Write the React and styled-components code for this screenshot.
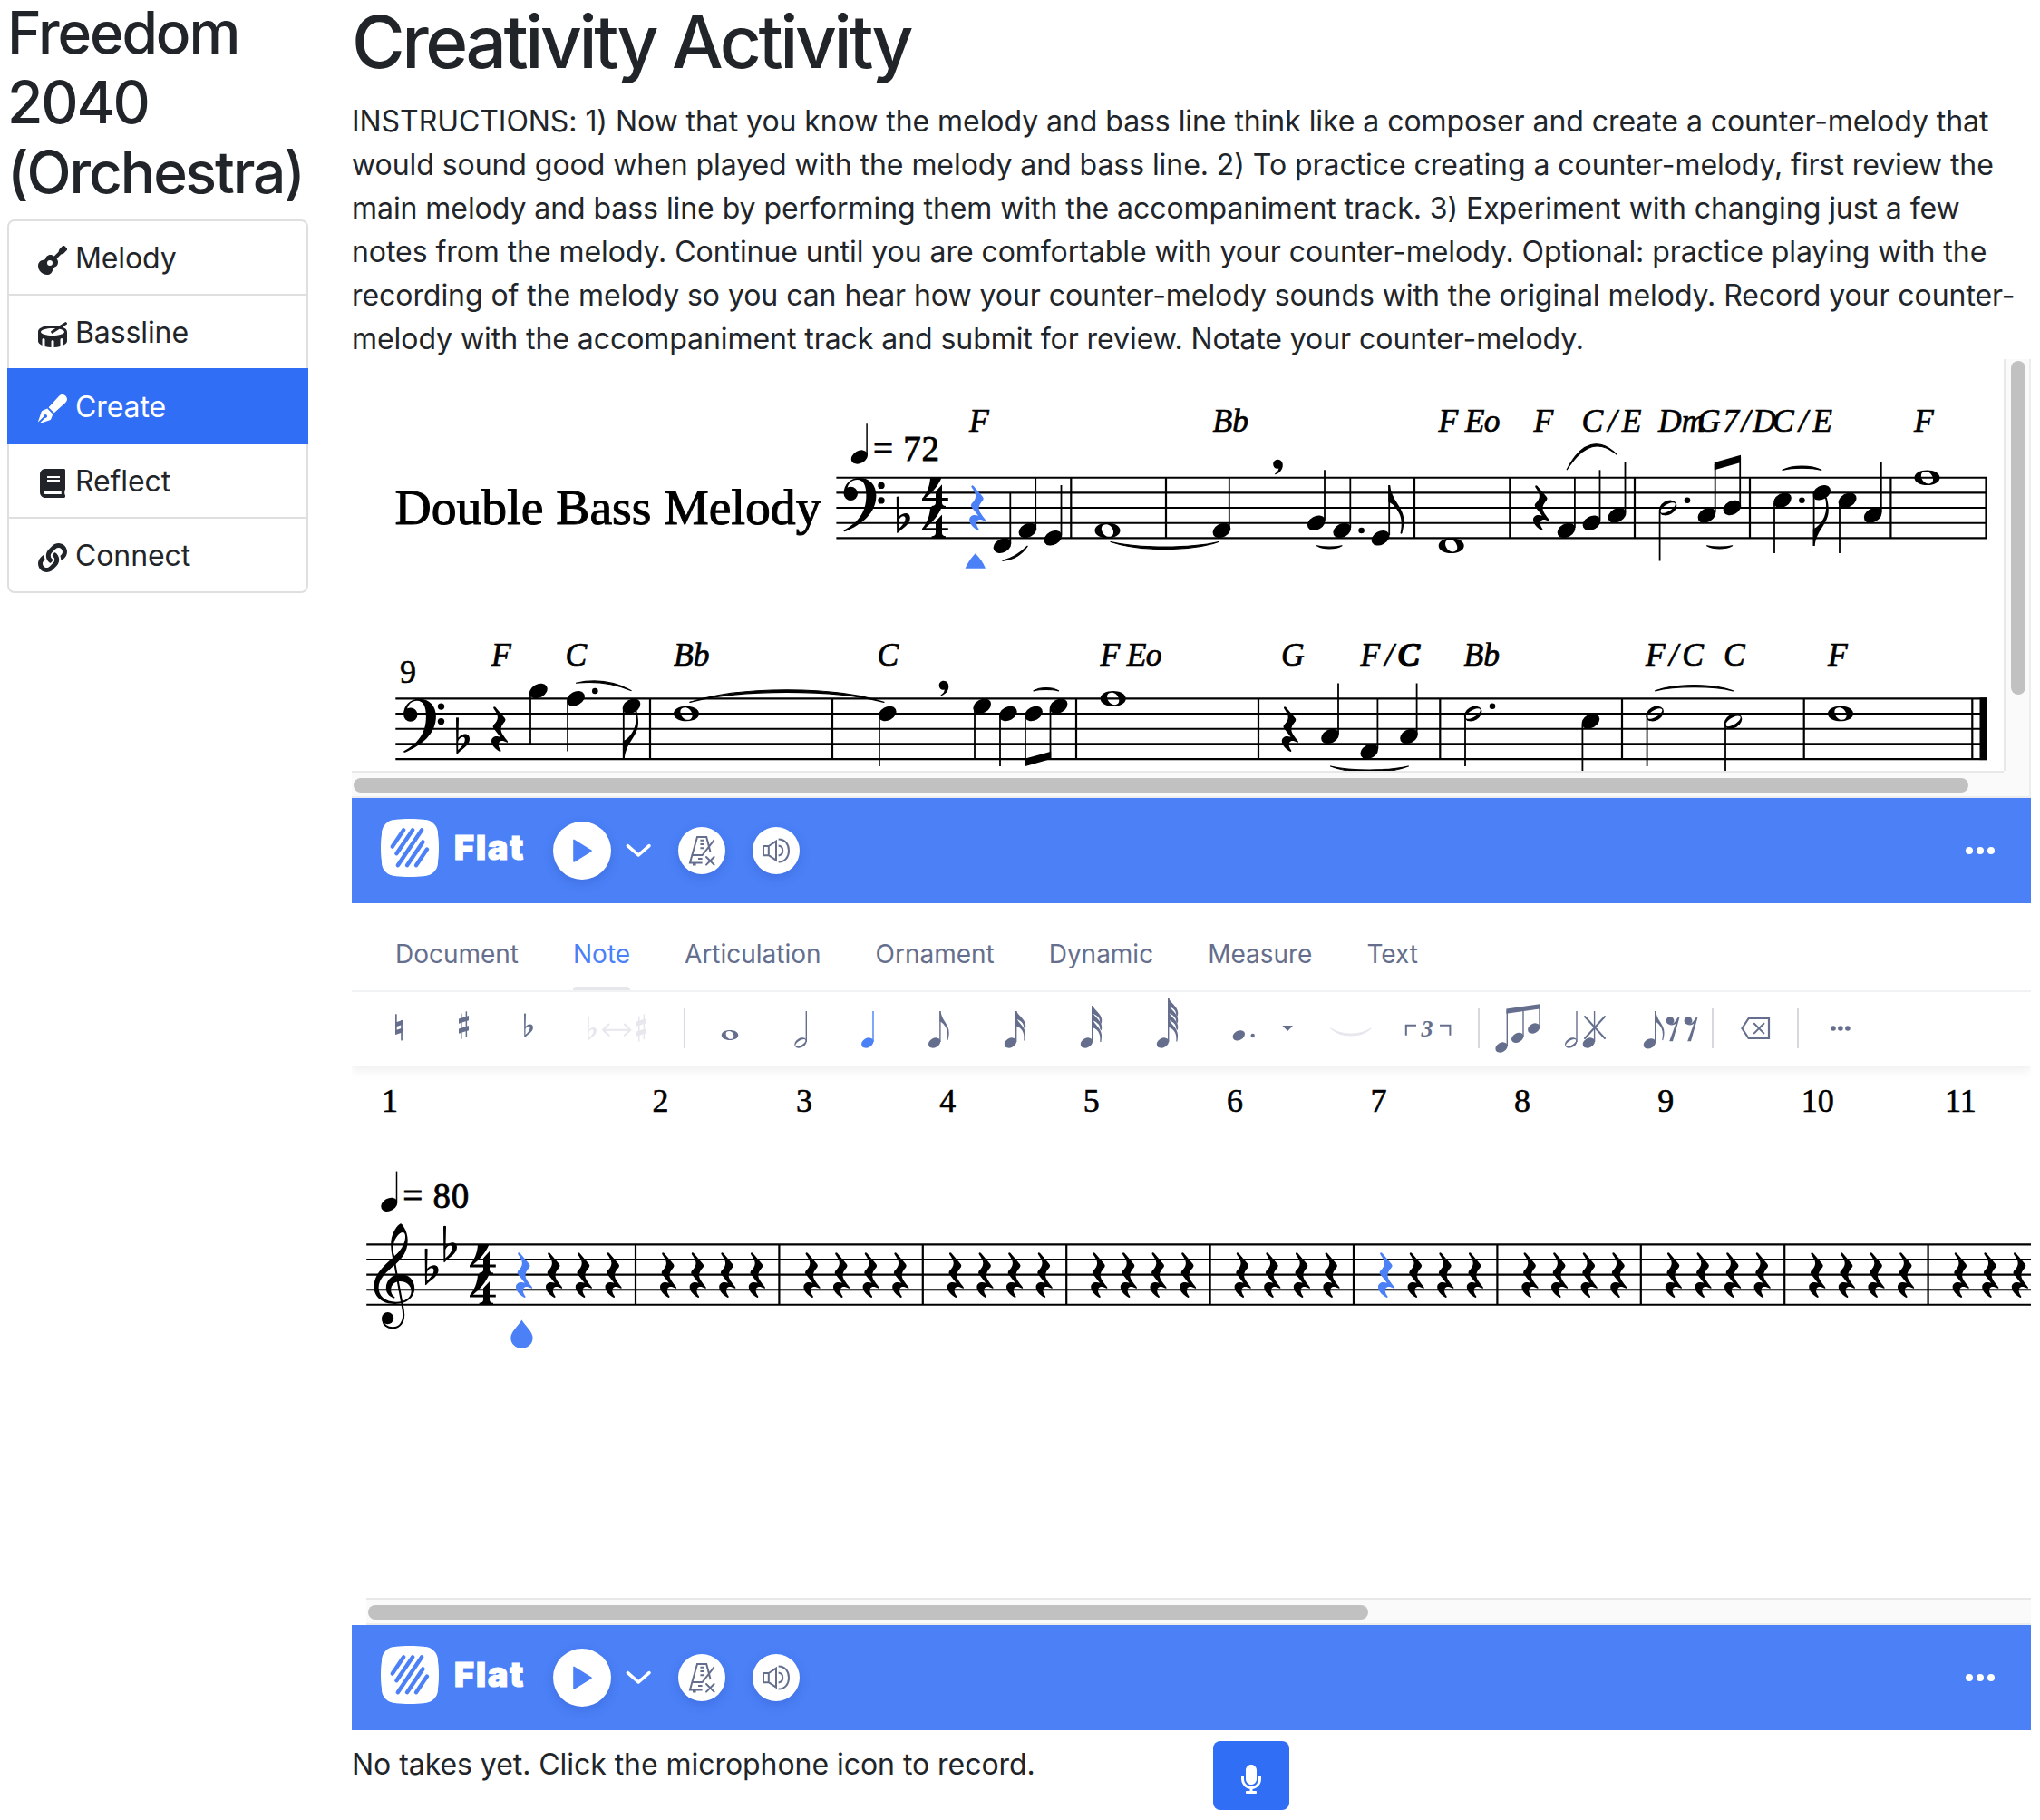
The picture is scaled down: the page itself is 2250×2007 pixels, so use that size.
import React from "react";
import styled, { createGlobalStyle, css } from "styled-components";
import { FaGuitar, FaDrum, FaPenFancy, FaBook, FaLink, FaMicrophone } from "react-icons/fa";

const BLUE = "#4b80f7";
const PRIMARY = "#306ef6";
const SLATE = "#656f8d";
const FAINT = "#e7e8ed";

const GlobalStyle = createGlobalStyle`
  html, body { margin: 0; background: #fff; }
  body {
    font-family: Inter, "Liberation Sans", sans-serif;
    font-size: 32px;
    line-height: 48px;
    color: #212529;
    overflow: hidden;
  }
  *, *::before, *::after { box-sizing: border-box; }
`;

const Page = styled.div`
  display: flex;
  width: 2250px;
  height: 2007px;
  overflow: hidden;
`;

const Sidebar = styled.aside`
  width: 332px;
  margin: 0 48px 0 8px;
  padding-top: 0;
  flex: none;
`;

const SongTitle = styled.h2`
  margin: -2px 0 13.6px;
  font-size: 64px;
  line-height: 76.8px;
  font-weight: 500;
  letter-spacing: -2.1px;
`;

const NavList = styled.nav`
  display: flex;
  flex-direction: column;
  border: 2px solid #dfdfdf;
  border-radius: 8px;
`;

const NavItem = styled.a`
  display: flex;
  align-items: center;
  height: 82px;
  padding: 2px 32px 0;
  gap: 9px;
  color: #212529;
  letter-spacing: -0.1px;
  border-bottom: 2px solid #dfdfdf;
  svg { width: 32px; height: 32px; margin-top: 5px; }
  &:last-child { border-bottom: 0; height: 80px; }
  ${(p) => p.$active && css`
    color: #fff;
    background: ${PRIMARY};
    margin: -2px -2px 0;
    padding: 4px 34px 0;
    height: 84px;
    border-color: ${PRIMARY};
  `}
`;

const Main = styled.main`
  width: 1852px;
  flex: none;
`;

const PageTitle = styled.h1`
  margin: -2px 0 15.5px;
  font-size: 80px;
  line-height: 96px;
  font-weight: 500;
  letter-spacing: -3.45px;
`;

const Instructions = styled.p`
  margin: 0 0 -1.5px;
  white-space: nowrap;
  letter-spacing: -0.06px;
`;

const ScoreViewer = styled.section`
  display: grid;
  grid-template-columns: 1822px 30px;
  grid-template-rows: 454px 30px;
  height: 484px;
  background: #fafafa;
`;

const Sheet = styled.svg`
  display: block;
  background: #fff;
  font-family: "Liberation Serif", serif;
`;

const VTrack = styled.div`
  background: #fafafa;
  border-left: 2px solid #e8e8e8;
  border-right: 2px solid #ededed;
  padding: 2px 4px 0 6px;
`;

const HTrack = styled.div`
  height: 30px;
  margin-left: ${(p) => p.$inset || 0}px;
  background: #fafafa;
  border-top: 2px solid #e8e8e8;
  border-bottom: 2px solid #ededed;
  padding: 6px 0 0 2px;
`;

const Corner = styled.div`
  border-right: 2px solid #ededed;
  border-bottom: 2px solid #ededed;
`;

const Thumb = styled.div`
  width: ${(p) => p.$w}px;
  height: ${(p) => p.$h}px;
  border-radius: 8px;
  background: #c1c1c1;
`;

const PlayerBar = styled.header`
  display: flex;
  align-items: center;
  height: 116px;
  padding: 0 40px 0 32px;
  background: ${BLUE};
`;

const Brand = styled.div`
  display: flex;
  align-items: center;
  gap: 17px;
  width: 190px;
  height: 64px;
  margin-bottom: 6px;
  color: #fff;
  font-size: 37.5px;
  font-weight: 900;
  letter-spacing: 2px;
  -webkit-text-stroke: 1.2px #fff;
`;

const RoundButton = styled.button`
  width: ${(p) => p.$size}px;
  height: ${(p) => p.$size}px;
  padding: 0;
  border: 0;
  border-radius: 50%;
  background: #fff;
  box-shadow: 0 4px 12px rgba(30, 60, 150, 0.22);
  margin-right: ${(p) => p.$gap || 0}px;
  svg { display: block; }
`;

const Menu = styled.button`
  display: flex;
  gap: 4px;
  margin-left: auto;
  padding: 0;
  border: 0;
  background: none;
  i { width: 8px; height: 8px; border-radius: 50%; background: #fff; }
`;

const Chevron = styled.svg`
  margin: 0 28px 0 12px;
`;

const Tabs = styled.div`
  display: flex;
  gap: 60px;
  height: 98px;
  padding-left: 48px;
  border-bottom: 2px solid #f1f2f4;
`;

const Tab = styled.div`
  display: flex;
  flex-direction: column;
  justify-content: flex-end;
  font-size: 28px;
  line-height: 40px;
  letter-spacing: -0.01px;
  color: ${(p) => (p.$active ? BLUE : SLATE)};
  &::after {
    content: "";
    height: 4px;
    margin-top: 16px;
    border-radius: 4px 4px 0 0;
    background: ${(p) => (p.$active ? "#e6e7ea" : "transparent")};
  }
`;

const Toolbar = styled.div`
  display: flex;
  height: 82px;
  position: relative;
  box-shadow: 0 4px 12px rgba(0, 0, 0, 0.07);
  clip-path: inset(0 0 -24px 0);
`;

const Tool = styled.svg`
  display: block;
  flex: none;
  color: ${(p) => p.$color || SLATE};
  font-family: "Liberation Serif", serif;
`;

const RecordRow = styled.div`
  display: flex;
  align-items: flex-start;
  padding-top: 12px;
`;

const TakesNote = styled.div`
  width: 950px;
  padding-top: 2px;
  letter-spacing: -0.05px;
`;

const RecordButton = styled.button`
  display: flex;
  align-items: center;
  justify-content: center;
  width: 84px;
  height: 76px;
  padding: 8px 0 0;
  border: 0;
  border-radius: 8px;
  background: ${PRIMARY};
  color: #fff;
  svg { width: 32px; height: 32px; }
`;

/* ---------- notation primitives ---------- */

const SP = 16.67;

const Lines = ({ x1, x2, y, step = SP }) => (
  <g stroke="currentColor" strokeWidth="2.1">
    {[0, 1, 2, 3, 4].map((i) => (
      <line key={i} x1={x1} x2={x2} y1={y + i * step} y2={y + i * step} />
    ))}
  </g>
);

const Bar = ({ x, y, h = 66.7, w = 2.2 }) => (
  <rect x={x - w / 2} y={y} width={w} height={h} fill="currentColor" />
);

const Stem = ({ x, y1, y2, w = 1.8 }) => (
  <line x1={x} x2={x} y1={y1} y2={y2} stroke="currentColor" strokeWidth={w} />
);

const Head = ({ x, y, k = 1 }) => (
  <ellipse rx="10.5" ry="7.5" fill="currentColor" transform={`translate(${x} ${y}) scale(${k}) rotate(-29)`} />
);

const HalfHead = ({ x, y, k = 1 }) => (
  <path
    fill="currentColor"
    fillRule="evenodd"
    d="M-10.5 0A10.5 7.5 0 1 0 10.5 0A10.5 7.5 0 1 0-10.5 0ZM-9.2 .6A9.2 3.8 0 1 1 9.2-.6A9.2 3.8 0 1 1-9.2 .6Z"
    transform={`translate(${x} ${y}) scale(${k}) rotate(-31)`}
  />
);

const Whole = ({ x, y, k = 1 }) => (
  <path
    fill="currentColor"
    fillRule="evenodd"
    d="M-14 0C-14-5-8-8.3 0-8.3S14-5 14 0S8 8.3 0 8.3S-14 5-14 0ZM-4.6-5.9C-8-4-6.8 1.6-3.2 4.9C-.8 7 2.6 7.3 4.7 5.9C8 3.6 6.6-1.8 3.2-5C.8-7-2.4-7.2-4.6-5.9Z"
    transform={`translate(${x} ${y}) scale(${k})`}
  />
);

const Dot = ({ x, y, r = 3.3 }) => <circle cx={x} cy={y} r={r} fill="currentColor" />;

const FLAG = "M-.9 0H.9C1.6 7.5 4.6 13.6 9.2 20.6C13.6 27.4 16.2 32.5 16.2 39.6C16.2 44.6 15.2 49.2 14.3 53Q13.2 54.4 12.3 53C13.9 46.5 14.3 38.6 11.3 31.8C8.3 25.4 4 20.6-.9 18.6Z";
const Flag = ({ x, y, down, k = 1 }) => (
  <path d={FLAG} fill="currentColor" transform={`translate(${x} ${y}) scale(${k} ${down ? -k : k})`} />
);

const Rest = ({ x, y, color = "currentColor" }) => (
  <path
    transform={`translate(${x} ${y})`}
    fill={color}
    d="M2.5 2.4C1.4 .6 3.2-.6 4.4 .8L14.8 13Q16.2 14.8 15 16.6C12 20 10.3 22.8 10.5 25.8C10.8 29.5 14.3 34 17.8 38.2C18.6 39.3 18 40.4 16.8 39.6C13.5 37.8 9.8 37.3 8.4 39.8C7 42.4 8.2 45.6 10.4 48.6C10.9 49.6 10 50.3 9 49.8C4.6 47.2 0 42.6 0 38.2C0 34 4.6 31.8 9.8 33.8L2.2 24Q1 22.3 2.3 20.6C5 17.6 6.9 15.3 6.9 12C6.9 8.6 4.6 5.6 2.5 2.4Z"
  />
);

const FlatSign = ({ x, y, k = 1 }) => (
  <path
    fill="currentColor"
    fillRule="evenodd"
    transform={`translate(${x} ${y}) scale(${k})`}
    d="M0 .6Q1.5-.3 3 .6L2.5 22.4C5 19.8 7.8 18.6 10.2 18.6C13.2 18.6 15 20.8 15 24C15 31.2 6 35.2 1.7 40.2Q.6 41.2 .4 39.6ZM2.3 26.4L2.2 36C6 32.8 9.8 28.2 9.8 24.4C9.8 20 4.2 21.4 2.3 26.4Z"
  />
);

const SharpSign = ({ x, y }) => (
  <g transform={`translate(${x} ${y})`} fill="currentColor">
    <rect x="2" y="2.4" width="1.5" height="28" />
    <rect x="7.6" y="0" width="1.5" height="28" />
    <path d="M0 8.2L11 4.8V10L0 13.4ZM0 19.2L11 15.8V21L0 24.4Z" />
  </g>
);

const BassClef = ({ x, y }) => (
  <g transform={`translate(${x} ${y})`} fill="currentColor">
    <path d="M.6 17.5C.6 7 8 0 17.8 0C29 0 36.4 7.6 36.4 19.4C36.4 39 20 51.6 2.4 59Q.4 59.6 .6 57.9C15 49.8 25.4 39.4 25.4 19.5C25.4 8.4 22.4 2 15.4 2C9.8 2 5.6 5.6 4.6 11.4Z" />
    <circle cx="8.3" cy="17.4" r="7.7" />
    <circle cx="42" cy="8.4" r="3.7" />
    <circle cx="42" cy="24.9" r="3.7" />
  </g>
);

const TrebleClef = ({ x, y }) => (
  <g transform={`translate(${x} ${y})`}>
    <path
      fill="currentColor"
      fillRule="evenodd"
      d="M28.6 .5C23.6 4 19 13 18.8 22C18.7 28 19.6 33 20.6 38C10 47.5 0 56.5 0 69.4C0 81.4 10 88.6 23 88.6C36.4 88.6 44.8 81.4 44.8 71.4C44.8 62.2 38 55.8 29.4 55.8C20.4 55.8 13.4 62.4 13.4 71C13.4 76.6 16.6 80.6 22.2 82.2C23.3 82.3 23.4 81.4 22.6 80.8C19.8 78.6 18.8 76 18.8 73.2C18.8 67.6 23.4 63.8 28.6 63.8C35.8 63.8 41.2 68.4 41.2 74.6C41.2 81.8 33.6 86.4 24.4 86.4C12.4 86.4 5.2 79.8 5.2 70.8C5.2 60.4 14 53.2 23 45.6C30.6 39.2 37.3 31 37.3 18.4C37.3 10.6 33.4 3.4 30.6 .5Q29.6-.5 28.6 .5ZM22.6 35.8C21 31 21 27 21.6 23.4C22.8 16 28.4 9.8 31.8 9.8C34 9.8 34.8 12.4 34.6 15.6C34 23.4 28.4 31.2 22.6 35.8Z"
    />
    <path
      fill="none"
      stroke="currentColor"
      strokeWidth="2.1"
      d="M21.8 36C24.6 56 29 76 32.4 96C34.2 108.6 28.6 115 20.8 115C14.6 115 10.4 111.6 9.7 106"
    />
    <circle cx="15.2" cy="104.4" r="6.6" fill="currentColor" />
  </g>
);

const FOUR = "M9 0H21.4C18.4 8 10.4 17 3.8 22.2H15V15L22 7.4V22.2H28.8V25H22V27.4C22 30 23.4 31 26 31.2V33.3H10.6V31.2C13.6 31 15 30 15 27.4V25H0V22.8C5 17.4 8.6 9 9 0Z";
const CommonTime = ({ x, y }) => (
  <g fill="currentColor">
    <path d={FOUR} transform={`translate(${x} ${y})`} />
    <path d={FOUR} transform={`translate(${x} ${y + 33.2})`} />
  </g>
);

const Breath = ({ x, y }) => (
  <path
    transform={`translate(${x} ${y})`}
    fill="currentColor"
    d="M5.2 0C8.8 0 10.8 2.8 10.8 6.2C10.8 10.8 7.6 14.8 2.8 16.6Q1.8 16.6 2.2 15.6C5 13.8 6.2 12 6.3 9.8C3 10.6 .2 8.6 .2 5C.2 2.2 2.4 0 5.2 0Z"
  />
);

const Slur = ({ x1, y1, x2, y2, bend, t = 3.4 }) => {
  const dx = (x2 - x1) * 0.26;
  const s = Math.sign(bend);
  const outer = bend + (s * t) / 2;
  const inner = bend - (s * t) / 2;
  return (
    <path
      d={`M${x1} ${y1}C${x1 + dx} ${y1 + outer} ${x2 - dx} ${y2 + outer} ${x2} ${y2}C${x2 - dx} ${y2 + inner} ${x1 + dx} ${y1 + inner} ${x1} ${y1}Z`}
      fill="currentColor"
      stroke="currentColor"
      strokeWidth="1.2"
      strokeLinejoin="round"
    />
  );
};

const Chord = ({ x, y, w, bold, children }) => (
  <text
    x={x}
    y={y + 0.4}
    fontSize="35.5"
    fontStyle="italic"
    fontWeight={bold ? 700 : 400}
    stroke="currentColor"
    strokeWidth="0.7"
    textLength={w}
  >
    {children}
  </text>
);

const Tempo = ({ x, y, children }) => (
  <g>
    <Head x={x} y={y} k={0.92} />
    <Stem x={x + 8.2} y1={y - 3} y2={y - 36.7} w={1.5} />
    <text x={x + 15} y={y + 4} fontSize="39" textLength="73" stroke="currentColor" strokeWidth="0.8">
      {children}
    </text>
  </g>
);

/* [x, y, stemX, stemEnd, flag] */
const QUARTERS = [
  [1105.5, 601.7, 1114.3, 543.3],
  [1133.4, 585, 1142.2, 526.7],
  [1161.4, 593.3, 1170.5, 535],
  [1347.4, 585, 1355.8, 526.7],
  [1451.8, 576.7, 1461, 518.3],
  [1480.2, 585, 1489.3, 526.7],
  [1522.6, 593.3, 1532.2, 535, 1],
  [1727.5, 585, 1736.9, 526.7],
  [1755.5, 576.7, 1764.5, 518.3],
  [1783.5, 568.3, 1792.5, 510],
  [1882.4, 568.3, 1891.7, 512],
  [1910.4, 560, 1919.2, 504],
  [1966, 551.7, 1957, 610],
  [2009.2, 543.3, 2000.6, 602, 1],
  [2037.6, 551.7, 2029, 610],
  [2065.6, 568.3, 2074.8, 510],
  [593.8, 762, 585, 820],
  [635, 770.3, 626.1, 828.5],
  [696.5, 778.7, 687.8, 836, 1],
  [978.7, 787, 969.9, 845],
  [1083.2, 778.7, 1075, 837],
  [1111.8, 787, 1103, 845],
  [1140, 787, 1130.9, 844],
  [1167.6, 778.7, 1158.5, 836],
  [1467, 812, 1476, 753.5],
  [1510.3, 828.7, 1519.4, 770],
  [1554, 812, 1562.6, 753.5],
  [1754.4, 795.3, 1745.4, 853],
];

const HALVES = [
  [1839.6, 560, 1830.6, 618.5],
  [1624.7, 787, 1616, 845],
  [1825.2, 787, 1816.6, 845],
  [1911.5, 795.3, 1903, 853],
];

const MelodySheet = () => (
  <Sheet width="1822" height="454" viewBox="388 396 1822 454" color="#000">
    <text x="435.5" y="577.5" fontSize="54.5" textLength="470" lengthAdjust="spacingAndGlyphs" stroke="currentColor" strokeWidth="1">
      Double Bass Melody
    </text>
    <Tempo x={947.9} y={504}>= 72</Tempo>
    <Lines x1={922.4} x2={2191.6} y={526.7} />
    <Lines x1={436.3} x2={2191.6} y={770.4} />
    {[1181.3, 1286, 1560, 1665.3, 1803, 1930, 2085.4, 2190.5].map((x) => (
      <Bar key={x} x={x} y={526.7} />
    ))}
    {[717, 918, 1187, 1388, 1588.3, 1789, 1989.7, 2175.3].map((x) => (
      <Bar key={x} x={x} y={770.4} />
    ))}
    <Bar x={2187.6} y={769.4} w={8.2} h={68.7} />
    <BassClef x={930} y={527} />
    <FlatSign x={988.8} y={547.4} />
    <CommonTime x={1017} y={526.9} />
    <BassClef x={444.5} y={770.7} />
    <FlatSign x={503} y={791} />
    <Rest x={1069.2} y={535} color={BLUE} />
    <path d="M1064.6 626.8C1067.6 620 1071 615.4 1075.8 610.3C1080.6 615.4 1084.2 620 1087 626.8Z" fill={BLUE} />
    <Rest x={1691} y={535} />
    <Rest x={542} y={779} />
    <Rest x={1413.8} y={779} />
    {QUARTERS.map(([x, y, sx, end, flag]) => (
      <g key={`${x}`}>
        <Head x={x} y={y} />
        <Stem x={sx} y1={y + (end < y ? -3 : 3)} y2={end} />
        {flag && <Flag x={sx} y={end} down={end > y} />}
      </g>
    ))}
    {HALVES.map(([x, y, sx, end]) => (
      <g key={`${x}`}>
        <HalfHead x={x} y={y} />
        <Stem x={sx} y1={y + 3} y2={end} />
      </g>
    ))}
    {[[1221.5, 585], [1600.7, 601.7], [2125.5, 526.7], [757, 787], [1227.7, 770.4], [2030, 787]].map(([x, y]) => (
      <Whole key={x} x={x} y={y} />
    ))}
    {[[1501.6, 585], [1861, 551.7], [1987.4, 551.7], [656.3, 762], [1646, 778.7]].map(([x, y]) => (
      <Dot key={x} x={x} y={y} />
    ))}
    <path d="M1890.8 510L1920 501.7V510L1890.8 518.3Z" fill="currentColor" />
    <path d="M1130 836.7L1159.2 828.7V837L1130 845.3Z" fill="currentColor" />
    <Breath x={1404} y={506.7} />
    <Breath x={1035.5} y={750.7} />
    <path d="M1105.5 618.3C1118 615.5 1126 609.5 1133.4 602C1127 611.5 1118.5 617.5 1105.5 618.3Z" fill="currentColor" stroke="currentColor" strokeWidth="1.2" />
    <Slur x1={1225} y1={597.5} x2={1344} y2={597.5} bend={9} />
    <Slur x1={1452.5} y1={601.8} x2={1480} y2={601.8} bend={3} t={2.4} />
    <path d="M1728 518.3C1744 486 1765 482 1783.5 501.7C1765 485.5 1747 488.5 1728 518.3Z" fill="currentColor" stroke="currentColor" strokeWidth="1.1" />
    <Slur x1={1882.6} y1={601.8} x2={1910.6} y2={601.8} bend={3} t={2.4} />
    <Slur x1={1966} y1={518.3} x2={2008.8} y2={518.3} bend={-4.2} t={2.8} />
    <path d="M635 753.3C656 748.5 678 751.5 696.5 761.7C678 754 656 751 635 753.3Z" fill="currentColor" stroke="currentColor" strokeWidth="1.1" />
    <Slur x1={760.8} y1={774.4} x2={975} y2={774.4} bend={-16.5} />
    <Slur x1={1140} y1={761.8} x2={1167.6} y2={761.8} bend={-3.2} t={2.4} />
    <Slur x1={1467.5} y1={845} x2={1553.4} y2={845} bend={7} />
    <Slur x1={1825.6} y1={761.8} x2={1911.5} y2={761.8} bend={-7} t={2.8} />
    <Chord x={1069} y={475.8}>F</Chord>
    <Chord x={1337.5} y={475.8}>Bb</Chord>
    <Chord x={1586.5} y={475.8} w={68}>F Eo</Chord>
    <Chord x={1691.5} y={475.8}>F</Chord>
    <Chord x={1744.5} y={475.8} w={66}>C/E</Chord>
    <Chord x={1829} y={475.8}>Dm</Chord>
    <Chord x={1872} y={475.8} w={87}>G7/D</Chord>
    <Chord x={1955} y={475.8} w={66}>C/E</Chord>
    <Chord x={2111} y={475.8}>F</Chord>
    <text x="441" y="752.8" fontSize="36" stroke="currentColor" strokeWidth="0.6">9</text>
    <Chord x={542} y={734}>F</Chord>
    <Chord x={623.5} y={734}>C</Chord>
    <Chord x={743} y={734}>Bb</Chord>
    <Chord x={967.5} y={734}>C</Chord>
    <Chord x={1213.5} y={734} w={68}>F Eo</Chord>
    <Chord x={1413} y={734}>G</Chord>
    <Chord x={1500.5} y={734} w={66}>F/C</Chord>
    <Chord x={1541.5} y={734} bold>C</Chord>
    <Chord x={1614.5} y={734}>Bb</Chord>
    <Chord x={1815} y={734} w={64}>F/C</Chord>
    <Chord x={1901} y={734}>C</Chord>
    <Chord x={2016} y={734}>F</Chord>
  </Sheet>
);

const MEASURE = 158.4;
const FIRST_BAR = 701;

const EditorSheet = () => (
  <Sheet width="1852" height="586" viewBox="388 1176 1852 586" color="#000">
    <g fontSize="36" stroke="currentColor" strokeWidth="0.6">
      <text x="421" y="1225.5">1</text>
      {Array.from({ length: 10 }, (_, i) => (
        <text key={i} x={719.5 + i * MEASURE} y="1225.5">{i + 2}</text>
      ))}
    </g>
    <Tempo x={429.3} y={1328.3}>= 80</Tempo>
    <Lines x1={404.2} x2={2240} y={1372.4} step={16.6} />
    {Array.from({ length: 10 }, (_, i) => (
      <Bar key={i} x={FIRST_BAR + i * MEASURE} y={1372.4} h={66.4} />
    ))}
    <TrebleClef x={412.4} y={1349.3} />
    <FlatSign x={468.6} y={1376.6} />
    <FlatSign x={489} y={1351.6} />
    <CommonTime x={518} y={1372.4} />
    {[569, 602, 634.8, 667.5].map((x, j) => (
      <Rest key={x} x={x} y={1381} color={j === 0 ? BLUE : undefined} />
    ))}
    {Array.from({ length: 10 }, (_, i) =>
      [0, 1, 2, 3].map((j) => (
        <Rest
          key={`${i}-${j}`}
          x={FIRST_BAR + 27 + i * MEASURE + j * 32.6}
          y={1381}
          color={i === 5 && j === 0 ? BLUE : undefined}
        />
      ))
    )}
    <path d="M575.4 1455.6C580 1463 587.6 1468.6 587.6 1475.6C587.6 1482 582 1487 575.4 1487S563.3 1482 563.3 1475.6C563.3 1468.6 571 1463 575.4 1455.6Z" fill={BLUE} />
  </Sheet>
);

/* ---------- note toolbar ---------- */

const SmallFlags = ({ x, y, n }) => (
  <g transform={`translate(${x} ${y})`} fill="currentColor">
    {Array.from({ length: n - 1 }, (_, i) => (
      <path
        key={i}
        transform={`translate(0 ${i * 7.6})`}
        d="M-.6 0H.6C1.4 4.6 10 8.4 10.4 15.6C10.5 17.4 10.2 18.8 9.6 20L8.4 18C8.6 12.6 3.8 10.2-.6 8.2Z"
      />
    ))}
    <path
      transform={`translate(0 ${(n - 1) * 7.6})`}
      d={`M-.6 0H.6C1.6 5 9.6 9 10.2 17C10.4 20 10 22.6 9.6 24.8H8.4C9 19.6 8.8 11.6-.6 8.6Z`}
    />
  </g>
);

const Divider = ({ x }) => <rect x={x - 1} y="18" width="2" height="44" fill="#d7d8e0" />;

const Cross = ({ x, y, w, h = w, s = 2 }) => (
  <path d={`M${x} ${y}l${w} ${h}M${x + w} ${y}l${-w} ${h}`} stroke="currentColor" strokeWidth={s} strokeLinecap="round" fill="none" />
);

const SmallNote = ({ x, top = 21, y = 56, half }) => (
  <g>
    {half ? <HalfHead x={x} y={y} k={0.68} /> : <Head x={x} y={y} k={0.68} />}
    <Stem x={x + 6.3} y1={y - 1} y2={top} w={1.4} />
  </g>
);

const EighthRest = ({ x }) => (
  <g transform={`translate(${x} 0)`}>
    <circle cx="8.6" cy="31.5" r="4.4" fill="currentColor" />
    <path d="M7 35.2C11.2 36.4 14.2 33.2 16.8 28.2L19 28L11.6 54.2H7.8L14.8 35C12 36.8 9.4 37 7 35.2Z" fill="currentColor" />
  </g>
);

const TOOLS = [
  { w: 87, draw: (
    <g fill="currentColor">
      <rect x="436" y="24.3" width="1.7" height="22" />
      <rect x="442.2" y="31" width="1.7" height="22.4" />
      <path d="M436 33.6L443.9 31V36L436 38.6ZM436 42.2L443.9 39.6V44.4L436 47Z" />
    </g>
  ) },
  { w: 70, draw: <SharpSign x={506} y={21.3} /> },
  { w: 75, draw: <FlatSign x={578} y={23.3} k={0.66} /> },
  { w: 120, color: FAINT, draw: (
    <g>
      <FlatSign x={648} y={26.8} k={0.66} />
      <path d="M665 41.7H695.4M671.6 35.6L665 41.7L671.6 47.8M688.8 35.6L695.4 41.7L688.8 47.8" fill="none" stroke="currentColor" strokeWidth="2" strokeLinecap="round" strokeLinejoin="round" />
      <SharpSign x={702} y={24.3} />
    </g>
  ) },
  { w: 30, draw: <Divider x={755} /> },
  { w: 75, draw: <Whole x={805} y={47.4} k={0.66} /> },
  { w: 75, draw: <SmallNote x={883} half /> },
  { w: 75, color: BLUE, draw: <SmallNote x={956.7} /> },
  { w: 80, draw: (
    <g><SmallNote x={1030.6} /><Flag x={1037} y={21} k={0.6} /></g>
  ) },
  { w: 85, draw: (
    <g><SmallNote x={1114.4} /><SmallFlags x={1120.8} y={21} n={2} /></g>
  ) },
  { w: 85, draw: (
    <g><SmallNote x={1198.4} top={15} /><SmallFlags x={1204.8} y={15} n={3} /></g>
  ) },
  { w: 85, draw: (
    <g><SmallNote x={1282.4} top={7} /><SmallFlags x={1288.8} y={7} n={4} /></g>
  ) },
  { w: 70, draw: (
    <g><Head x={1366.3} y={47.8} k={0.68} /><Dot x={1381.7} y={48} r={2.2} /></g>
  ) },
  { w: 40, draw: <path d="M1414.3 37H1426L1420.2 43Z" fill="currentColor" /> },
  { w: 90, color: FAINT, draw: <Slur x1={1468} y1={40} x2={1512} y2={40} bend={9.4} t={2.4} /> },
  { w: 90, draw: (
    <g>
      <path d="M1550.8 47.8V36.8H1562M1588 36.8H1599.4V47.8" fill="none" stroke="currentColor" strokeWidth="2" />
      <text x="1567.6" y="48.6" fontSize="26" fontWeight="700" fontStyle="italic" fill="currentColor">3</text>
    </g>
  ) },
  { w: 20, draw: <Divider x={1631} /> },
  { w: 75, draw: (
    <g>
      <SmallNote x={1656} y={61} top={20} />
      <SmallNote x={1673.7} y={50.4} top={17} />
      <SmallNote x={1691.7} y={40} top={15} />
      <path d="M1661.4 18.5L1698.2 13.3V18.5L1661.4 23.8Z" fill="currentColor" />
    </g>
  ) },
  { w: 75, draw: (
    <g><SmallNote x={1732.7} half /><SmallNote x={1752.3} /><Cross x={1748} y={27} w={22} h={24} /></g>
  ) },
  { w: 85, draw: (
    <g>
      <SmallNote x={1819.4} y={56.8} /><Flag x={1825.8} y={21} k={0.6} />
      <EighthRest x={1833.4} /><EighthRest x={1853.4} />
    </g>
  ) },
  { w: 25, draw: <Divider x={1889} /> },
  { w: 70, draw: (
    <g>
      <path d="M1921.4 40L1928.6 29H1951V51H1928.6Z" fill="none" stroke="currentColor" strokeWidth="2.2" />
      <Cross x={1934.8} y={34.8} w={10.6} />
    </g>
  ) },
  { w: 25, draw: <Divider x={1983} /> },
  { w: 65, draw: <g>{[2022, 2029.9, 2037.9].map((x) => <Dot key={x} x={x} y={40} r={2.8} />)}</g> },
];

const NoteToolbar = () => {
  let left = 388;
  return (
    <Toolbar>
      {TOOLS.map(({ w, color, draw }) => {
        const x = left;
        left += w;
        return (
          <Tool key={x} $color={color} width={w} height="82" viewBox={`${x} 0 ${w} 82`}>
            {draw}
          </Tool>
        );
      })}
    </Toolbar>
  );
};

/* ---------- player bar ---------- */

const Player = () => (
  <PlayerBar>
    <Brand>
      <svg width="64" height="64" viewBox="0 0 64 64">
        <path d="M32 0C56 0 64 2 64 32S56 64 32 64S0 62 0 32S8 0 32 0Z" fill="#fff" />
        <rect x="1" y="1" width="62" height="62" rx="15" fill="#fff" />
        <path
          d="M25.2 12.2L12.8 30.6M35.2 12.2L17.4 38.2M45.2 12.2L18.8 51.2M46.4 25.4L29 51.2M51 33.6L39 51.2"
          stroke={BLUE}
          strokeWidth="4.4"
          strokeLinecap="round"
        />
      </svg>
      Flat
    </Brand>
    <RoundButton $size={64}>
      <svg width="64" height="64"><path d="M23 20.4V44L42 32.2Z" fill={BLUE} stroke={BLUE} strokeWidth="1.6" strokeLinejoin="round" /></svg>
    </RoundButton>
    <Chevron width="34" height="30" viewBox="0 0 34 30">
      <path d="M6.4 9.6L18.2 20L30 9.6" fill="none" stroke="#fff" strokeWidth="3.6" strokeLinecap="round" strokeLinejoin="round" />
    </Chevron>
    <RoundButton $size={52} $gap={30}>
      <svg width="52" height="52" fill="none" stroke={SLATE} strokeWidth="2">
        <path d="M35.6 28L31.2 11H21L13 39.4H26.6M15.4 31H26.6L39.6 14.4M24.4 14.8H28M24.4 19H28M24.4 23.2H28M22 35H26.6M16 41.4H19.6" />
        <path d="M31 33L39.6 41.6M39.6 33L31 41.6" strokeLinecap="round" />
      </svg>
    </RoundButton>
    <RoundButton $size={52}>
      <svg width="52" height="52" fill="none" stroke={SLATE} strokeWidth="2">
        <path d="M12 21H17.8V31.2H12ZM17.8 21L26 15.6V36.6L17.8 31.2M28.6 20.6C31.6 21 33.2 23 33.2 26S31.6 31 28.6 31.4M28.6 13.4C36 13.6 40 19 40 26S36 38.4 28.6 38.6" />
      </svg>
    </RoundButton>
    <Menu aria-label="More"><i /><i /><i /></Menu>
  </PlayerBar>
);

const NAV = [
  ["Melody", FaGuitar],
  ["Bassline", FaDrum],
  ["Create", FaPenFancy],
  ["Reflect", FaBook],
  ["Connect", FaLink],
];

const TABS = ["Document", "Note", "Articulation", "Ornament", "Dynamic", "Measure", "Text"];

export default function App() {
  return (
    <Page>
      <GlobalStyle />
      <Sidebar>
        <SongTitle>Freedom<br />2040<br />(Orchestra)</SongTitle>
        <NavList>
          {NAV.map(([label, Icon]) => (
            <NavItem key={label} $active={label === "Create"}>
              <Icon />
              {label}
            </NavItem>
          ))}
        </NavList>
      </Sidebar>
      <Main>
        <PageTitle>Creativity Activity</PageTitle>
        <Instructions>
          INSTRUCTIONS: 1) Now that you know the melody and bass line think like a composer and create a counter-melody that<br />
          would sound good when played with the melody and bass line. 2) To practice creating a counter-melody, first review the<br />
          main melody and bass line by performing them with the accompaniment track. 3) Experiment with changing just a few<br />
          notes from the melody. Continue until you are comfortable with your counter-melody. Optional: practice playing with the<br />
          recording of the melody so you can hear how your counter-melody sounds with the original melody. Record your counter-<br />
          melody with the accompaniment track and submit for review. Notate your counter-melody.
        </Instructions>
        <ScoreViewer>
          <MelodySheet />
          <VTrack><Thumb $w={16} $h={368} /></VTrack>
          <HTrack><Thumb $w={1781} $h={16} /></HTrack>
          <Corner />
        </ScoreViewer>
        <Player />
        <Tabs>
          {TABS.map((t) => <Tab key={t} $active={t === "Note"}>{t}</Tab>)}
        </Tabs>
        <NoteToolbar />
        <EditorSheet />
        <HTrack $inset={16}><Thumb $w={1103} $h={16} /></HTrack>
        <Player />
        <RecordRow>
          <TakesNote>No takes yet. Click the microphone icon to record.</TakesNote>
          <RecordButton><FaMicrophone /></RecordButton>
        </RecordRow>
      </Main>
    </Page>
  );
}
